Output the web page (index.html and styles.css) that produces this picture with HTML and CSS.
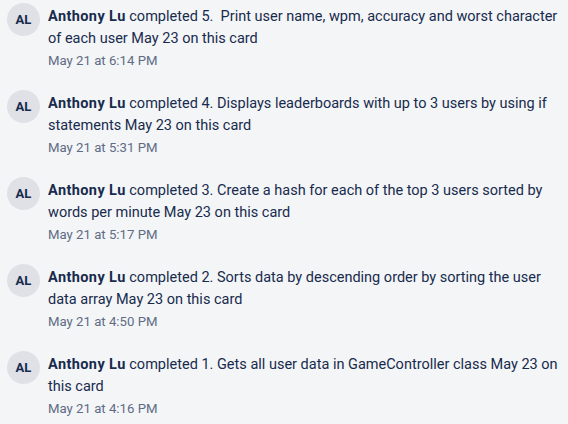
FILE: index.html
```html
<!DOCTYPE html>
<html>
<head>
<meta charset="utf-8">
<link rel="stylesheet" href="styles.css">
</head>
<body>
<div class="feed">
  <div class="item">
    <div class="avatar">AL</div>
    <div class="body">
      <div class="desc"><span class="name">Anthony Lu</span> completed 5.&nbsp; Print user name, wpm, accuracy and worst character of each user May 23 on this card</div>
      <div class="time">May 21 at 6:14 PM</div>
    </div>
  </div>
  <div class="item">
    <div class="avatar">AL</div>
    <div class="body">
      <div class="desc"><span class="name">Anthony Lu</span> completed 4. Displays leaderboards with up to 3 users by using if statements May 23 on this card</div>
      <div class="time">May 21 at 5:31 PM</div>
    </div>
  </div>
  <div class="item">
    <div class="avatar">AL</div>
    <div class="body">
      <div class="desc"><span class="name">Anthony Lu</span> completed 3. Create a hash for each of the top 3 users sorted by words per minute May 23 on this card</div>
      <div class="time">May 21 at 5:17 PM</div>
    </div>
  </div>
  <div class="item">
    <div class="avatar">AL</div>
    <div class="body">
      <div class="desc"><span class="name">Anthony Lu</span> completed 2. Sorts data by descending order by sorting the user data array May 23 on this card</div>
      <div class="time">May 21 at 4:50 PM</div>
    </div>
  </div>
  <div class="item">
    <div class="avatar">AL</div>
    <div class="body">
      <div class="desc"><span class="name">Anthony Lu</span> completed 1. Gets all user data in GameController class May 23 on this card</div>
      <div class="time">May 21 at 4:16 PM</div>
    </div>
  </div>
</div>
</body>
</html>
```
FILE: styles.css
```css
html, body {
  margin: 0;
  padding: 0;
  background: #f4f5f7;
}
body {
  font-family: Roboto, "Liberation Sans", sans-serif;
  color: #172b4d;
}
.feed {
  display: flex;
  flex-direction: column;
  gap: 22px;
  padding: 6px 6px 0 7px;
}
.item {
  display: flex;
  gap: 8px;
  align-items: flex-start;
}
.avatar {
  flex: none;
  width: 33px;
  height: 33px;
  margin-top: -3px;
  border-radius: 50%;
  background: #dfe1e6;
  color: #172b4d;
  font-weight: 700;
  font-size: 13px;
  display: flex;
  align-items: center;
  justify-content: center;
}
.body {
  flex: 1;
  min-width: 0;
}
.desc {
  font-size: 14.5px;
  line-height: 22px;
}
.name {
  font-weight: 700;
  letter-spacing: 0.4px;
}
.time {
  font-size: 13.2px;
  line-height: 21px;
  color: #5e6c84;
}
```
